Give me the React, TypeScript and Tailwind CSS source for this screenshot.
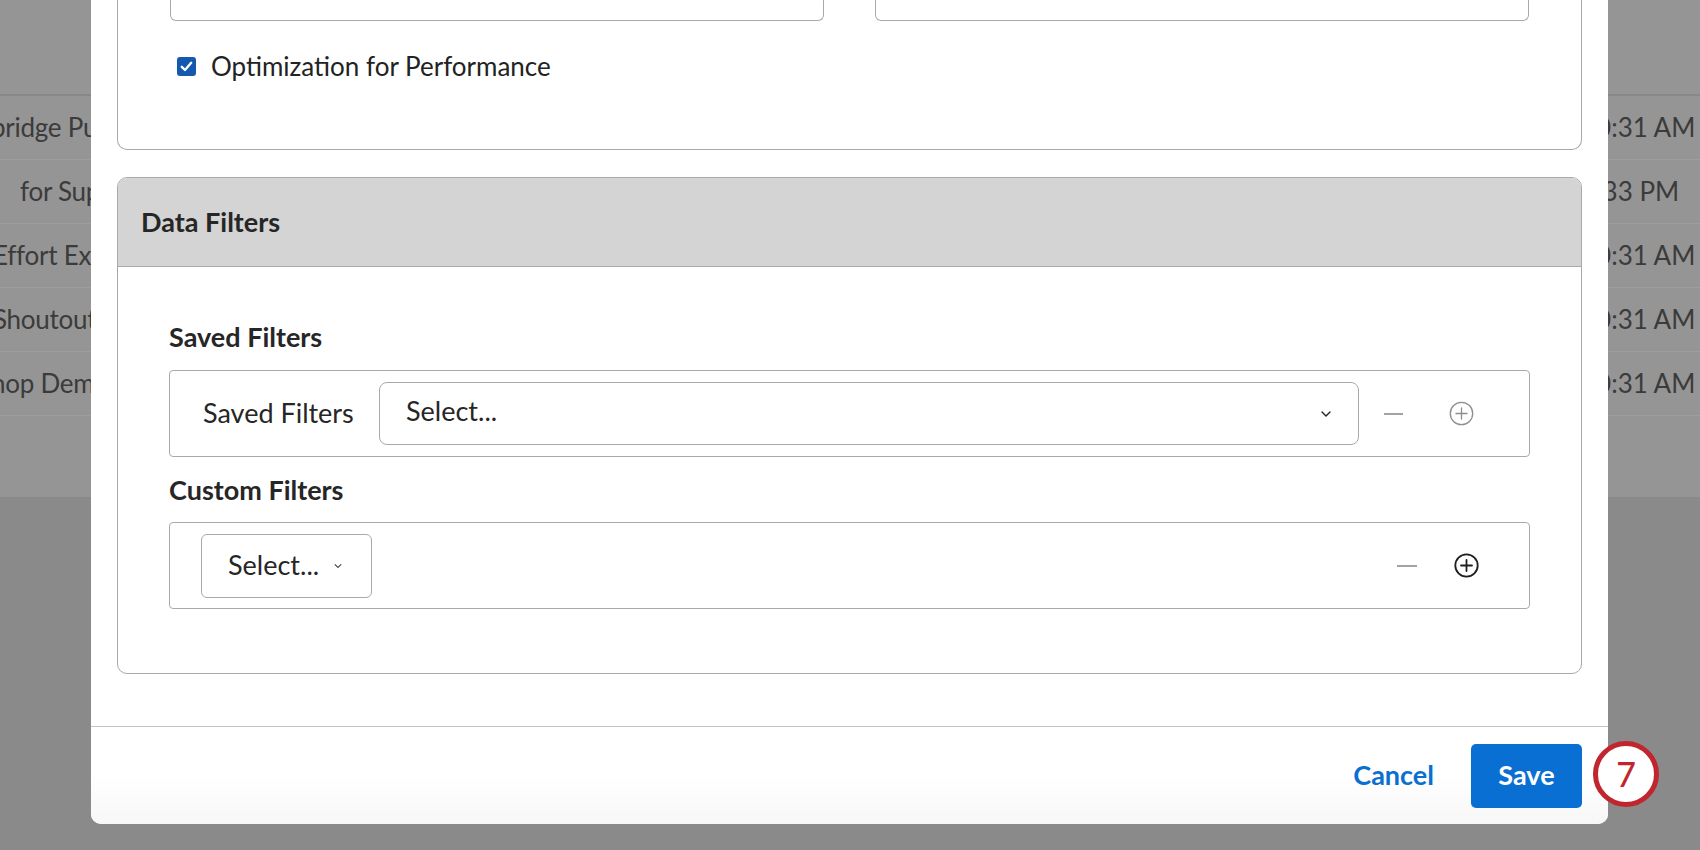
import React from "react";

const rows = [
  { left: "bridge Public Library", ml: "ml-[-9px]", right: "10:31 AM" },
  { left: "for Support Team", ml: "ml-[20px]", right: "1:33 PM" },
  { left: "Effort Expectations", ml: "ml-[-7px]", right: "10:31 AM" },
  { left: "Shoutouts Board", ml: "ml-[-7px]", right: "10:31 AM" },
  { left: "hop Demo", ml: "ml-[-9px]", right: "10:31 AM" },
];

const Chevron = () => (
  <svg width="10" height="6" viewBox="0 0 10 6" fill="none">
    <path d="M1 1l4 4 4-4" stroke="#222" strokeWidth="1.4" strokeLinecap="round" strokeLinejoin="round" />
  </svg>
);

const Minus = ({ className }: { className: string }) => (
  <span className={`block h-[2px] bg-[#a3a3a3] ${className}`} />
);

const PlusCircle = ({ active }: { active: boolean }) => (
  <svg width="25" height="25" viewBox="0 0 25 25" fill="none">
    <circle cx="12.5" cy="12.5" r="11.2" stroke={active ? "#1f1f1f" : "#8e8e8e"} strokeWidth={active ? 1.8 : 1.3} />
    <path
      d="M12.5 7v11M7 12.5h11"
      stroke={active ? "#1f1f1f" : "#8e8e8e"}
      strokeWidth={active ? 1.8 : 1.3}
      strokeLinecap="round"
    />
  </svg>
);

const Background = () => (
  <div className="flex flex-col h-[850px]">
    <div className="bg-[#959595]">
      <div className="h-[96px] border-b-2 border-[#888888]" />
      {rows.map((r) => (
        <div key={r.left} className="h-[64px] flex items-center border-b border-[#9d9d9d] text-[26px] tracking-[-0.01em] text-[#3b3b3b] whitespace-nowrap">
          <span className={r.ml}>{r.left}</span>
          <span className="ml-auto w-[119px] tracking-normal">{r.right}</span>
        </div>
      ))}
      <div className="h-[81px]" />
    </div>
    <div className="flex-1 bg-[#8a8a8a]" />
  </div>
);

const Modal = () => (
  <div className="absolute left-[91px] top-0 bottom-[26px] w-[1517px] bg-white rounded-b-[10px] flex flex-col overflow-hidden">
    <div className="flex-1 px-[26px] pb-[52px] flex flex-col">
      {/* Settings card, top cut off by scroll */}
      <div className="border-x border-b border-[#a9a9a9] rounded-b-[10px] px-[52px] pb-[68px]">
        <div className="grid grid-cols-2 gap-[51px]">
          <div className="h-[21px] border-x border-b border-[#a9a9a9] rounded-b-[6px]" />
          <div className="h-[21px] border-x border-b border-[#a9a9a9] rounded-b-[6px]" />
        </div>
        <div className="mt-[30px] h-[30px] flex items-center pl-[7px] gap-[15px]">
          <span className="w-[19px] h-[19px] rounded-[3px] bg-[#1459ae] flex items-center justify-center">
            <svg width="13" height="11" viewBox="0 0 13 11" fill="none">
              <path d="M1.8 5.8l3.2 3.2 6.2-7.2" stroke="white" strokeWidth="2.4" strokeLinecap="round" strokeLinejoin="round" />
            </svg>
          </span>
          <span className="text-[26px] text-[#222]">Optimization for Performance</span>
        </div>
      </div>

      {/* Data filters card */}
      <div className="mt-[27px] border border-[#a9a9a9] rounded-[10px] overflow-hidden">
        <div className="h-[89px] bg-[#d4d4d4] border-b border-[#a9a9a9] px-[23px] flex items-center">
          <span className="text-[27px] font-bold text-[#262626]">Data Filters</span>
        </div>
        <div className="px-[51px] pt-[54px] pb-[64px]">
          <div className="h-[32px] flex items-center text-[27px] font-bold text-[#262626]">Saved Filters</div>
          <div className="mt-[17px] h-[87px] border border-[#a9a9a9] rounded-[4px] flex items-center pl-[33px] pr-[55px]">
            <span className="w-[176px] text-[27px] text-[#262626]">Saved Filters</span>
            <div className="flex-1 h-[63px] border border-[#a9a9a9] rounded-[8px] flex items-center pl-[26px] pr-[27px]">
              <span className="text-[27px] text-[#262626] -mt-[4px]">Select...</span>
              <span className="ml-auto"><Chevron /></span>
            </div>
            <Minus className="ml-[25px] w-[19px]" />
            <span className="ml-[46px]"><PlusCircle active={false} /></span>
          </div>

          <div className="mt-[17px] h-[32px] flex items-center text-[27px] font-bold text-[#262626]">Custom Filters</div>
          <div className="mt-[16px] h-[87px] border border-[#a9a9a9] rounded-[4px] flex items-center pl-[31px] pr-[50px]">
            <div className="w-[171px] h-[64px] border border-[#a9a9a9] rounded-[6px] flex items-center pl-[26px] pr-[28px]">
              <span className="text-[27px] text-[#262626]">Select...</span>
              <span className="ml-auto scale-75"><Chevron /></span>
            </div>
            <span className="flex-1" />
            <Minus className="w-[20px]" />
            <span className="ml-[37px]"><PlusCircle active={true} /></span>
          </div>
        </div>
      </div>
    </div>

    {/* footer */}
    <div className="h-[98px] border-t border-[#c2c2c2] bg-gradient-to-b from-white via-white to-[#f7f7f7] flex items-center justify-end pr-[26px] gap-[19px]">
      <button className="px-[18px] h-[64px] text-[27px] font-bold text-[#0a6fd1]">Cancel</button>
      <button className="w-[111px] h-[64px] rounded-[5px] bg-[#0a6fd3] text-[27px] font-bold text-white">Save</button>
    </div>
  </div>
);

export default function App() {
  return (
    <div className="relative w-[1700px] h-[850px] overflow-hidden font-['Lato','Liberation_Sans',sans-serif]">
      <Background />
      <Modal />
      <div className="absolute left-[1593px] top-[741px] w-[66px] h-[66px] rounded-full border-[5px] border-[#c1262f] bg-white flex items-center justify-center">
        <span className="text-[34px] font-medium text-[#c1262f] leading-none">7</span>
      </div>
    </div>
  );
}
